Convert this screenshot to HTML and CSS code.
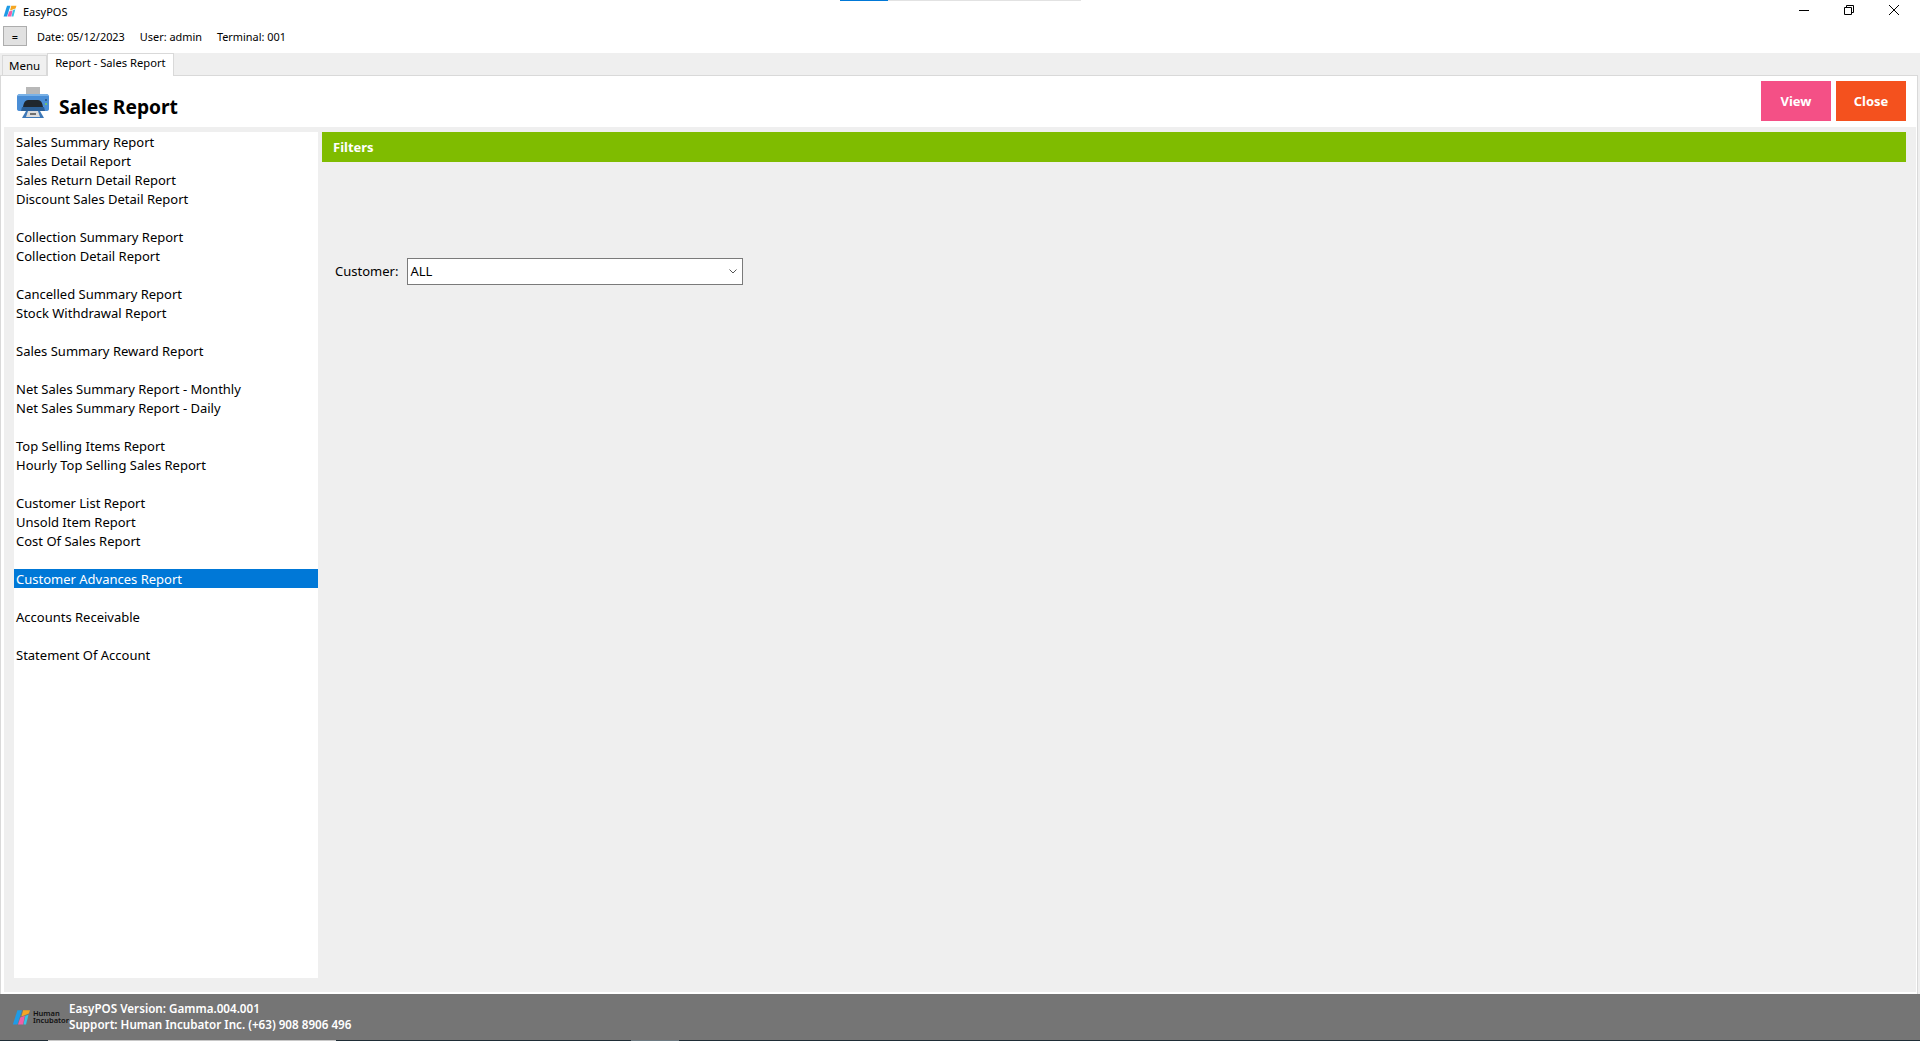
FILE: index.html
```html
<!DOCTYPE html>
<html lang="en">
<head>
    <meta charset="UTF-8">
    <title>EasyPOS</title>
    <link rel="stylesheet" href="styles.css">
</head>
<body>
    <div class="loading-line"><span class="loading-done"></span></div>

    <header class="titlebar">
        <div class="app-name">
            <svg class="app-logo" viewBox="0 0 16 14">
                <path d="M0.5 13.5 L4.5 1 H8.5 L4.5 13.5 Z" fill="#1f9be6"/>
                <path d="M5 13.5 L7 7.5 L11 6 L9.5 13.5 Z" fill="#ef5fa7"/>
                <path d="M9.5 1 H15.5 L14.5 4 L8 6.5 Z" fill="#f5a623"/>
                <path d="M9.8 13.5 L11.4 6 L14.2 5 L12 13.5 Z" fill="#35c3e8"/>
            </svg>
            <span>EasyPOS</span>
        </div>
        <div class="window-buttons">
            <svg viewBox="0 0 12 12"><path d="M1 6.5 H11" stroke="#000" fill="none"/></svg>
            <svg viewBox="0 0 12 12"><path d="M1.5 3.5 H8.5 V10.5 H1.5 Z M3.5 3.5 V1.5 H10.5 V8.5 H8.5" stroke="#000" fill="none"/></svg>
            <svg viewBox="0 0 12 12"><path d="M1 1 L11 11 M11 1 L1 11" stroke="#000" fill="none"/></svg>
        </div>
    </header>

    <div class="toolbar">
        <button class="menu-toggle">=</button>
        <span>Date: 05/12/2023</span>
        <span>User: admin</span>
        <span>Terminal: 001</span>
    </div>

    <nav class="tabs">
        <div class="tab">Menu</div>
        <div class="tab tab-active">Report - Sales Report</div>
    </nav>

    <main class="page">
        <div class="page-head">
            <div class="page-title">
                <svg class="printer" viewBox="0 0 32 31">
                    <rect x="9" y="0" width="14" height="10" fill="#b8b8b8"/>
                    <path d="M3 7 H29 Q32 7 32 10 V22 Q32 24 29 24 H3 Q0 24 0 22 V10 Q0 7 3 7 Z" fill="#4a8ed6"/>
                    <path d="M3 7 H29 Q31 7 31.5 9 H0.5 Q1 7 3 7 Z" fill="#79b1e6"/>
                    <path d="M6 20 Q7 13 11 13 H21 Q25 13 26 20 Z" fill="#20272e"/>
                    <path d="M5 20 H27 L28 24 H4 Z" fill="#2c5f96"/>
                    <path d="M9 24 H23 L27 31 H5 Z" fill="#3d78b8"/>
                    <path d="M11 24 H21 L23 30 H9 Z" fill="#dcdcdc"/>
                    <rect x="13" y="26" width="6" height="2" fill="#6f6f6f"/>
                    <rect x="28" y="12" width="2" height="2" fill="#2c5f96"/>
                    <rect x="28" y="16" width="2" height="2" fill="#6fbf73"/>
                </svg>
                <h1>Sales Report</h1>
            </div>
            <div class="actions">
                <button class="action action-view">View</button>
                <button class="action action-close">Close</button>
            </div>
        </div>

        <div class="body-panel">
            <ul class="report-list">
                <li>Sales Summary Report</li>
                <li>Sales Detail Report</li>
                <li>Sales Return Detail Report</li>
                <li>Discount Sales Detail Report</li>
                <li></li>
                <li>Collection Summary Report</li>
                <li>Collection Detail Report</li>
                <li></li>
                <li>Cancelled Summary Report</li>
                <li>Stock Withdrawal Report</li>
                <li></li>
                <li>Sales Summary Reward Report</li>
                <li></li>
                <li>Net Sales Summary Report - Monthly</li>
                <li>Net Sales Summary Report - Daily</li>
                <li></li>
                <li>Top Selling Items Report</li>
                <li>Hourly Top Selling Sales Report</li>
                <li></li>
                <li>Customer List Report</li>
                <li>Unsold Item Report</li>
                <li>Cost Of Sales Report</li>
                <li></li>
                <li class="selected">Customer Advances Report</li>
                <li></li>
                <li>Accounts Receivable</li>
                <li></li>
                <li>Statement Of Account</li>
            </ul>

            <section class="filters">
                <div class="filters-head">Filters</div>
                <div class="filter-row">
                    <label>Customer:</label>
                    <div class="select">
                        <span>ALL</span>
                        <svg viewBox="0 0 8 5"><path d="M0.5 0.5 L4 4 L7.5 0.5" stroke="#555" fill="none"/></svg>
                    </div>
                </div>
            </section>
        </div>
    </main>

    <footer class="statusbar">
        <div class="company">
            <svg class="company-logo" viewBox="0 0 16 14">
                <path d="M0.5 13.5 L4.5 1 H8.5 L4.5 13.5 Z" fill="#1f9be6"/>
                <path d="M5 13.5 L7 7.5 L11 6 L9.5 13.5 Z" fill="#ef5fa7"/>
                <path d="M9.5 1 H15.5 L14.5 4 L8 6.5 Z" fill="#f5a623"/>
                <path d="M9.8 13.5 L11.4 6 L14.2 5 L12 13.5 Z" fill="#35c3e8"/>
            </svg>
            <span class="company-name">Human<br>Incubator</span>
        </div>
        <div class="version">
            <div>EasyPOS Version: Gamma.004.001</div>
            <div>Support: Human Incubator Inc. (+63) 908 8906 496</div>
        </div>
    </footer>
    <div class="taskbar-edge">
        <span class="edge-light"></span>
        <span class="edge-dim"></span>
    </div>
</body>
</html>
```

FILE: styles.css
```css
* {
    margin: 0;
    padding: 0;
    box-sizing: border-box;
}

html, body {
    height: 1041px;
    overflow: hidden;
}

body {
    display: flex;
    flex-direction: column;
    background: #efefef;
    font-family: "Noto Sans", sans-serif;
    font-size: 13px;
    color: #000;
    position: relative;
}

.loading-line {
    position: absolute;
    top: 0;
    left: 840px;
    width: 241px;
    height: 1px;
    background: #e2e2e2;
}

.loading-done {
    display: block;
    width: 48px;
    height: 100%;
    background: #0078d7;
}

.titlebar {
    height: 22px;
    background: #fff;
    display: flex;
    justify-content: space-between;
    align-items: center;
    flex-shrink: 0;
}

.app-name {
    display: flex;
    align-items: center;
    gap: 6px;
    padding-left: 3px;
    font-size: 11px;
}

.app-logo {
    width: 14px;
    height: 12px;
}

.window-buttons {
    display: flex;
    gap: 33px;
    padding-right: 20px;
    margin-top: -2px;
}

.window-buttons svg {
    width: 12px;
    height: 12px;
}

.toolbar {
    height: 31px;
    background: #fff;
    display: flex;
    align-items: center;
    padding: 0 0 3px 3px;
    gap: 15px;
    font-size: 10.9px;
    flex-shrink: 0;
}

.menu-toggle {
    width: 24px;
    height: 20px;
    margin-right: -5px;
    background: #e1e1e1;
    border: 1px solid #adadad;
    font-family: inherit;
    font-size: 11px;
}

.tabs {
    height: 22px;
    padding-left: 2px;
    display: flex;
    align-items: flex-end;
    flex-shrink: 0;
}

.tab {
    height: 20px;
    padding: 0 6px;
    font-size: 11.5px;
    background: #f0f0f0;
    border: 1px solid #d9d9d9;
    border-bottom: none;
    line-height: 19px;
}

.tab-active {
    height: 23px;
    background: #fff;
    font-size: 11.2px;
    line-height: 18px;
    margin-bottom: -1px;
    position: relative;
    padding: 0 7px;
}

.page {
    flex: 1;
    display: flex;
    flex-direction: column;
    min-height: 0;
    margin-right: 2px;
    padding: 0 1px 2px 3px;
    border-top: 1px solid #d9d9d9;
    border-right: 1px solid #d9d9d9;
    border-left: 1px solid #d9d9d9;
    background: #fff;
}

.page-head {
    height: 51px;
    display: flex;
    justify-content: space-between;
    flex-shrink: 0;
}

.page-title {
    display: flex;
    align-items: center;
    gap: 10px;
    padding-left: 13px;
}

.printer {
    width: 32px;
    height: 31px;
    margin-top: 2px;
}

.page-title h1 {
    font-size: 19.2px;
    font-weight: 700;
    margin-top: 10px;
}

.actions {
    display: flex;
    gap: 5px;
    padding: 5px 10px 0 0;
}

.action {
    width: 70px;
    height: 40px;
    border: none;
    color: #fff;
    font-family: inherit;
    font-size: 13px;
    font-weight: 700;
}

.action-view {
    background: #f45086;
}

.action-close {
    background: #f4511e;
}

.body-panel {
    flex: 1;
    min-height: 0;
    display: flex;
    gap: 4px;
    background: #efefef;
    padding: 5px 10px 14px 10px;
}

.report-list {
    width: 304px;
    background: #fff;
    list-style: none;
    flex-shrink: 0;
}

.report-list li {
    height: 19px;
    line-height: 20px;
    padding-left: 2px;
    white-space: nowrap;
}

.report-list .selected {
    background: #0078d7;
    color: #fff;
}

.filters {
    flex: 1;
}

.filters-head {
    height: 30px;
    line-height: 31px;
    padding-left: 11px;
    background: #7fbc00;
    color: #fff;
    font-size: 13px;
    font-weight: 700;
}

.filter-row {
    display: flex;
    align-items: center;
    gap: 9px;
    padding: 96px 0 0 13px;
}

.filter-row label {
    position: relative;
    top: -1px;
}

.select {
    width: 336px;
    height: 27px;
    background: #fff;
    border: 1px solid #7a7a7a;
    display: flex;
    align-items: center;
    justify-content: space-between;
    padding: 0 5px 0 2px;
}

.select span {
    position: relative;
    top: -1px;
}

.select svg {
    width: 8px;
    height: 5px;
}

.statusbar {
    height: 46px;
    background: #757575;
    color: #fff;
    display: flex;
    align-items: center;
    flex-shrink: 0;
    font-size: 11.65px;
    font-weight: 600;
}

.company {
    display: flex;
    align-items: center;
    gap: 2px;
    width: 69px;
    padding-left: 12px;
}

.company-logo {
    width: 19px;
    height: 16px;
}

.company-name {
    font-size: 7.5px;
    line-height: 7px;
    color: #111;
}

.version {
    line-height: 16px;
}

.taskbar-edge {
    height: 1px;
    background: #1f2d36;
    flex-shrink: 0;
    display: flex;
}

.edge-light {
    width: 288px;
    margin-left: 48px;
    background: #c8c8c8;
}

.edge-dim {
    width: 48px;
    margin-left: 295px;
    background: #6e7b82;
}
```
